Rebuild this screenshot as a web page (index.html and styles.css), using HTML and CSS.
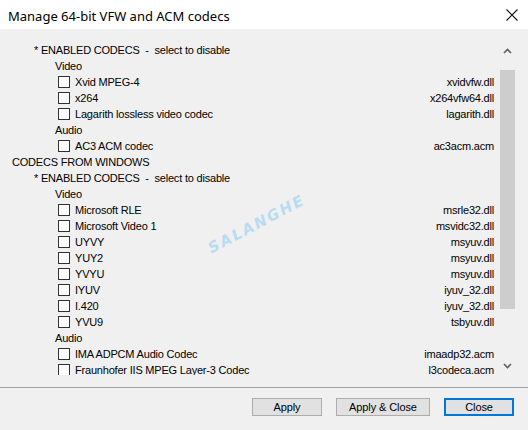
FILE: index.html
```html
<!DOCTYPE html>
<html>
<head>
<meta charset="utf-8">
<link rel="stylesheet" href="styles.css">
</head>
<body>
<div class="window">
  <div class="titlebar">
    <span class="title">Manage 64-bit VFW and ACM codecs</span>
    <svg class="close" width="12" height="12" viewBox="0 0 12 12"><path d="M0.5 0.5 L11.5 11.5 M11.5 0.5 L0.5 11.5" stroke="#111" stroke-width="1.1" fill="none"/></svg>
  </div>
  <div class="body">
    <div class="listwrap">
      <div class="list">
        <div class="row head">*&nbsp;ENABLED CODECS&nbsp;&nbsp;-&nbsp;&nbsp;select to disable</div>
        <div class="row group">Video</div>
        <div class="row item"><span class="cb"></span><span class="name">Xvid MPEG-4</span><span class="file">xvidvfw.dll</span></div>
        <div class="row item"><span class="cb"></span><span class="name">x264</span><span class="file">x264vfw64.dll</span></div>
        <div class="row item"><span class="cb"></span><span class="name">Lagarith lossless video codec</span><span class="file">lagarith.dll</span></div>
        <div class="row group">Audio</div>
        <div class="row item"><span class="cb"></span><span class="name">AC3 ACM codec</span><span class="file">ac3acm.acm</span></div>
        <div class="row section">CODECS FROM WINDOWS</div>
        <div class="row head">*&nbsp;ENABLED CODECS&nbsp;&nbsp;-&nbsp;&nbsp;select to disable</div>
        <div class="row group">Video</div>
        <div class="row item"><span class="cb"></span><span class="name">Microsoft RLE</span><span class="file">msrle32.dll</span></div>
        <div class="row item"><span class="cb"></span><span class="name">Microsoft Video 1</span><span class="file">msvidc32.dll</span></div>
        <div class="row item"><span class="cb"></span><span class="name">UYVY</span><span class="file">msyuv.dll</span></div>
        <div class="row item"><span class="cb"></span><span class="name">YUY2</span><span class="file">msyuv.dll</span></div>
        <div class="row item"><span class="cb"></span><span class="name">YVYU</span><span class="file">msyuv.dll</span></div>
        <div class="row item"><span class="cb"></span><span class="name">IYUV</span><span class="file">iyuv_32.dll</span></div>
        <div class="row item"><span class="cb"></span><span class="name">I.420</span><span class="file">iyuv_32.dll</span></div>
        <div class="row item"><span class="cb"></span><span class="name">YVU9</span><span class="file">tsbyuv.dll</span></div>
        <div class="row group">Audio</div>
        <div class="row item"><span class="cb"></span><span class="name">IMA ADPCM Audio Codec</span><span class="file">imaadp32.acm</span></div>
        <div class="row item"><span class="cb"></span><span class="name">Fraunhofer IIS MPEG Layer-3 Codec</span><span class="file">l3codeca.acm</span></div>
      </div>
      <div class="scrollbar">
        <div class="sbtn"><svg width="9" height="6" viewBox="0 0 9 6"><path d="M1 5 L4.5 1.5 L8 5" stroke="#606060" stroke-width="1.6" fill="none"/></svg></div>
        <div class="track"><div class="thumb"></div></div>
        <div class="sbtn"><svg width="9" height="6" viewBox="0 0 9 6"><path d="M1 1 L4.5 4.5 L8 1" stroke="#606060" stroke-width="1.6" fill="none"/></svg></div>
      </div>
      <span class="watermark">SALANGHE</span>
    </div>
    <div class="divider"></div>
    <div class="buttons">
      <button class="btn">Apply</button>
      <button class="btn wide">Apply &amp; Close</button>
      <button class="btn default">Close</button>
    </div>
  </div>
</div>
</body>
</html>
```
FILE: styles.css
```css
html, body {
  margin: 0;
  padding: 0;
  background: #f0f0f0;
}
.window {
  width: 528px;
  height: 430px;
  display: flex;
  flex-direction: column;
  background: #f0f0f0;
  overflow: hidden;
}
.titlebar {
  height: 29px;
  background: #ffffff;
  display: flex;
  align-items: center;
  justify-content: space-between;
  padding: 0 10px 0 8px;
  flex: none;
}
.title {
  font-family: "Noto Sans", "Open Sans", sans-serif;
  font-size: 13px;
  color: #000;
  position: relative;
  top: 1px;
}
.close {
  display: block;
}
.body {
  flex: 1;
  display: flex;
  flex-direction: column;
}
.listwrap {
  height: 346px;
  display: flex;
  position: relative;
  overflow: hidden;
  flex: none;
}
.list {
  flex: 1;
  padding: 13px 5px 0 0;
  font-family: "Liberation Sans", Arial, sans-serif;
  font-size: 11px;
  letter-spacing: -0.2px;
  color: #000;
}
.row {
  height: 16px;
  display: flex;
  align-items: center;
  white-space: nowrap;
}
.section { padding-left: 12px; }
.head { padding-left: 34px; }
.group { padding-left: 55px; }
.item { padding-left: 58px; }
.cb {
  width: 10px;
  height: 10px;
  border: 1px solid #333;
  background: #ffffff;
  flex: none;
  margin-right: 5px;
}
.name { flex: 1; }
.file { text-align: right; }
.scrollbar {
  width: 17px;
  margin-right: 12px;
  padding-top: 13px;
  padding-bottom: 1px;
  display: flex;
  flex-direction: column;
  flex: none;
}
.sbtn {
  height: 17px;
  display: flex;
  align-items: center;
  justify-content: center;
  flex: none;
}
.track {
  flex: 1;
  padding: 11px 1px 0 1px;
}
.thumb {
  height: 239px;
  background: #cdcdcd;
}
.watermark {
  position: absolute;
  left: 203px;
  top: 186px;
  font-family: "DejaVu Sans", sans-serif;
  font-weight: bold;
  font-style: italic;
  font-size: 15px;
  letter-spacing: 2px;
  color: #b8dcf1;
  transform: rotate(-28deg);
}
.divider {
  height: 1px;
  background: #a0a0a0;
  margin-top: 12px;
  flex: none;
}
.buttons {
  display: flex;
  justify-content: flex-end;
  gap: 14px;
  padding: 10px 14px 0 0;
}
.btn {
  width: 70px;
  height: 18px;
  padding: 0;
  background: #e1e1e1;
  border: 1px solid #adadad;
  font-family: "Liberation Sans", Arial, sans-serif;
  font-size: 11px;
  letter-spacing: -0.1px;
  color: #000;
}
.wide { width: 94px; }
.default {
  border: 2px solid #0078d7;
}
```
